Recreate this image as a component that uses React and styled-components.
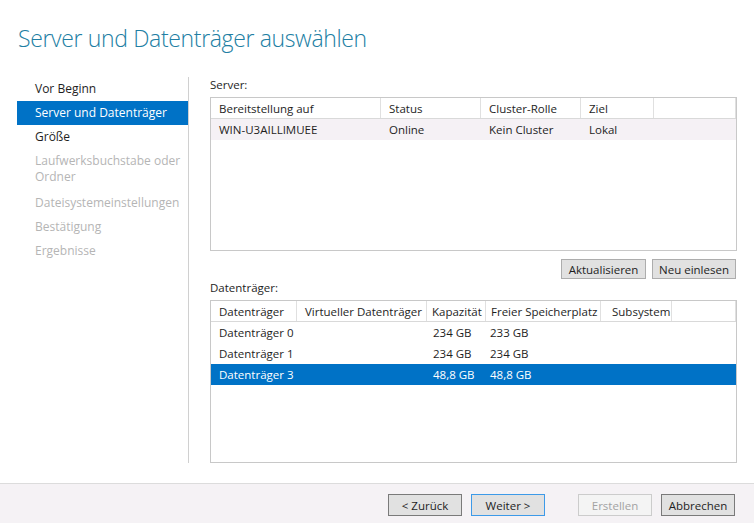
import React from "react";
import styled, { createGlobalStyle } from "styled-components";

const Global = createGlobalStyle`
  html, body { margin: 0; padding: 0; background: #fff; }
  body {
    width: 754px; height: 523px; overflow: hidden;
    font-family: "Open Sans", "Noto Sans", sans-serif;
    font-size: 11.5px; color: #1e1e1e;
  }
`;

const Window = styled.div`
  width: 754px; height: 523px;
  display: flex; flex-direction: column;
`;

const Title = styled.h1`
  margin: 0; padding: 22px 0 0 18px; height: 77px; box-sizing: border-box;
  font-weight: 300; font-size: 23px; line-height: 32px; color: #217ea3;
  letter-spacing: -0.35px;
`;

const Main = styled.div`
  flex: 1; display: flex; align-items: flex-start;
`;

const Sidebar = styled.nav`
  width: 189px; height: 386px; box-sizing: border-box;
  padding-left: 17px; border-right: 1px solid #d0d0d0;
  display: flex; flex-direction: column;
`;

const NavItem = styled.div`
  padding: 4px 6px ${p => (p.$multi ? 6 : 4)}px 18px; line-height: 16px; font-size: 12px;
  color: ${p => (p.$disabled ? "#b5b5b5" : p.$active ? "#ffffff" : "#1e1e1e")};
  background: ${p => (p.$active ? "#0072c6" : "transparent")};
`;

const Content = styled.div`
  flex: 1; padding: 0 17px 0 21px;
  display: flex; flex-direction: column;
`;

const Label = styled.div`
  height: 20px; line-height: 16px; font-size: 11.5px; color: #1e1e1e;
`;

const Grid = styled.div`
  height: ${p => p.$h}px; box-sizing: border-box;
  border: 1px solid #c8c8c8; background: #fff;
  display: flex; flex-direction: column;
`;

const Row = styled.div`
  display: grid; grid-template-columns: ${p => p.$cols};
  height: 21px; box-sizing: border-box; align-items: center;
  background: ${p => (p.$selected ? "#0072c6" : p.$inactive ? "#f5f1f5" : "transparent")};
  color: ${p => (p.$selected ? "#fff" : "#1e1e1e")};
  ${p => p.$header && "border-bottom: 1px solid #d9d9d9;"}
`;

const HeadCell = styled.div`
  height: 100%; box-sizing: border-box; padding-left: ${p => p.$pl ?? 8}px;
  border-right: 1px solid #e0e0e0;
  display: flex; align-items: center; white-space: nowrap; overflow: hidden;
`;

const Cell = styled.div`
  padding-left: ${p => p.$pl ?? 8}px; white-space: nowrap; overflow: hidden;
`;

const ButtonRow = styled.div`
  display: flex; justify-content: flex-end; gap: 6px;
  padding: 8px 1px 0 0; height: 29px; box-sizing: border-box;
`;

const Button = styled.button`
  width: ${p => p.$w}px; height: 20px; box-sizing: border-box;
  font-family: inherit; font-size: 11.5px; padding: 0;
  background: ${p => (p.$disabled ? "#f4f4f4" : "#e1e1e1")};
  color: ${p => (p.$disabled ? "#a3a3a3" : "#1e1e1e")};
  border: 1px solid ${p => (p.$default ? "#3d9ae8" : p.$disabled ? "#cccccc" : p.$dark ? "#7a7a7a" : "#adadad")};
`;

const Footer = styled.div`
  height: 40px; box-sizing: border-box; border-top: 1px solid #dcdcdc; background: #f5f2f5;
  display: flex; align-items: flex-start; justify-content: flex-end;
  padding: 10px 19px 0 0;
`;

const FooterButton = styled(Button)`
  height: 22px; margin-left: ${p => p.$ml}px;
`;

const serverCols = "170px 100px 100px 73px 1fr";
const diskCols = "86px 130px 59px 115px 71px 1fr";

const disks = [
  ["Datenträger 0", "", "234 GB", "233 GB", ""],
  ["Datenträger 1", "", "234 GB", "234 GB", ""],
  ["Datenträger 3", "", "48,8 GB", "48,8 GB", ""],
];

export default function App() {
  return (
    <Window>
      <Global />
      <Title>Server und Datenträger auswählen</Title>
      <Main>
        <Sidebar>
          <NavItem>Vor Beginn</NavItem>
          <NavItem $active>Server und Datenträger</NavItem>
          <NavItem>Größe</NavItem>
          <NavItem $disabled $multi>Laufwerksbuchstabe oder<br />Ordner</NavItem>
          <NavItem $disabled>Dateisystemeinstellungen</NavItem>
          <NavItem $disabled>Bestätigung</NavItem>
          <NavItem $disabled>Ergebnisse</NavItem>
        </Sidebar>
        <Content>
          <Label>Server:</Label>
          <Grid $h={154}>
            <Row $header $cols={serverCols}>
              <HeadCell>Bereitstellung auf</HeadCell>
              <HeadCell>Status</HeadCell>
              <HeadCell>Cluster-Rolle</HeadCell>
              <HeadCell>Ziel</HeadCell>
              <HeadCell />
            </Row>
            <Row $inactive $cols={serverCols}>
              <Cell>WIN-U3AILLIMUEE</Cell>
              <Cell>Online</Cell>
              <Cell>Kein Cluster</Cell>
              <Cell>Lokal</Cell>
              <Cell />
            </Row>
          </Grid>
          <ButtonRow>
            <Button $w={85}>Aktualisieren</Button>
            <Button $w={84}>Neu einlesen</Button>
          </ButtonRow>
          <Label>Datenträger:</Label>
          <Grid $h={163}>
            <Row $header $cols={diskCols}>
              <HeadCell>Datenträger</HeadCell>
              <HeadCell>Virtueller Datenträger</HeadCell>
              <HeadCell $pl={5}>Kapazität</HeadCell>
              <HeadCell $pl={5}>Freier Speicherplatz</HeadCell>
              <HeadCell $pl={11}>Subsystem</HeadCell>
              <HeadCell />
            </Row>
            {disks.map((d, i) => (
              <Row key={i} $selected={i === 2} $cols={diskCols}>
                <Cell>{d[0]}</Cell>
                <Cell>{d[1]}</Cell>
                <Cell $pl={6}>{d[2]}</Cell>
                <Cell $pl={4}>{d[3]}</Cell>
                <Cell>{d[4]}</Cell>
                <Cell />
              </Row>
            ))}
          </Grid>
        </Content>
      </Main>
      <Footer>
        <FooterButton $w={74} $dark $ml={0}>&lt; Zurück</FooterButton>
        <FooterButton $w={74} $default $ml={9}>Weiter &gt;</FooterButton>
        <FooterButton $w={74} $disabled $ml={33}>Erstellen</FooterButton>
        <FooterButton $w={74} $dark $ml={9}>Abbrechen</FooterButton>
      </Footer>
    </Window>
  );
}
